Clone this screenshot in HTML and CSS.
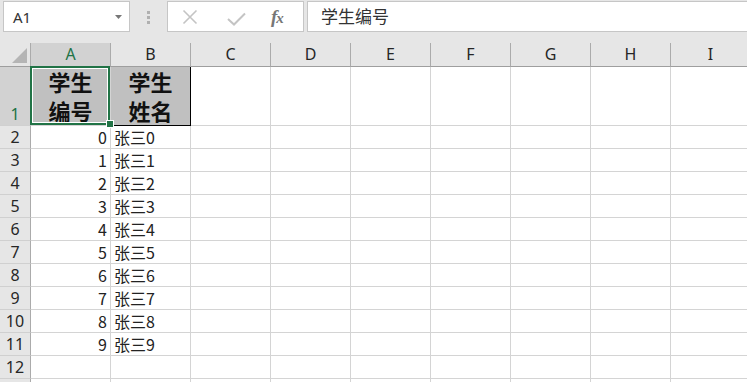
FILE: index.html
```html
<!DOCTYPE html>
<html lang="zh-CN">
<head>
    <meta charset="UTF-8">
    <meta name="viewport" content="width=device-width, initial-scale=1.0">
    <title>学生名单 - 工作表</title>
    <link rel="stylesheet" href="styles.css">
</head>
<body>
    <div class="formula-bar">
        <div class="name-box">
            <span>A1</span>
            <svg class="caret" width="7" height="4" viewBox="0 0 7 4"><polygon points="0,0 7,0 3.5,4" fill="#777"/></svg>
        </div>
        <div class="grip"><i></i><i></i><i></i></div>
        <div class="fx-box">
            <svg class="icon-cancel" width="16" height="16" viewBox="0 0 16 16"><path d="M1.5 1.5 L14.5 14.5 M14.5 1.5 L1.5 14.5" stroke="#c4c4c4" stroke-width="1.6" fill="none"/></svg>
            <svg class="icon-enter" width="19" height="14" viewBox="0 0 19 14"><path d="M1 7 L7 12.5 L18 1.5" stroke="#c4c4c4" stroke-width="2" fill="none"/></svg>
            <span class="fx"><i>f</i><i class="x">x</i></span>
        </div>
        <div class="formula-input">学生编号</div>
    </div>

    <div class="sheet">
        <!-- column headers -->
        <div class="corner">
            <svg width="15" height="15" viewBox="0 0 15 15"><polygon points="15,0 15,15 0,15" fill="#b5b5b5"/></svg>
        </div>
        <div class="col-head selected">A</div>
        <div class="col-head">B</div>
        <div class="col-head">C</div>
        <div class="col-head">D</div>
        <div class="col-head">E</div>
        <div class="col-head">F</div>
        <div class="col-head">G</div>
        <div class="col-head">H</div>
        <div class="col-head">I</div>

        <!-- row 1: titles -->
        <div class="row-head selected tall">1</div>
        <div class="cell title active">学生<br>编号<span class="fill-handle"></span></div>
        <div class="cell title boxed">学生<br>姓名</div>
        <div class="cell"></div><div class="cell"></div><div class="cell"></div><div class="cell"></div><div class="cell"></div><div class="cell"></div><div class="cell"></div>

        <div class="row-head">2</div>
        <div class="cell num">0</div><div class="cell">张三0</div>
        <div class="cell"></div><div class="cell"></div><div class="cell"></div><div class="cell"></div><div class="cell"></div><div class="cell"></div><div class="cell"></div>

        <div class="row-head">3</div>
        <div class="cell num">1</div><div class="cell">张三1</div>
        <div class="cell"></div><div class="cell"></div><div class="cell"></div><div class="cell"></div><div class="cell"></div><div class="cell"></div><div class="cell"></div>

        <div class="row-head">4</div>
        <div class="cell num">2</div><div class="cell">张三2</div>
        <div class="cell"></div><div class="cell"></div><div class="cell"></div><div class="cell"></div><div class="cell"></div><div class="cell"></div><div class="cell"></div>

        <div class="row-head">5</div>
        <div class="cell num">3</div><div class="cell">张三3</div>
        <div class="cell"></div><div class="cell"></div><div class="cell"></div><div class="cell"></div><div class="cell"></div><div class="cell"></div><div class="cell"></div>

        <div class="row-head">6</div>
        <div class="cell num">4</div><div class="cell">张三4</div>
        <div class="cell"></div><div class="cell"></div><div class="cell"></div><div class="cell"></div><div class="cell"></div><div class="cell"></div><div class="cell"></div>

        <div class="row-head">7</div>
        <div class="cell num">5</div><div class="cell">张三5</div>
        <div class="cell"></div><div class="cell"></div><div class="cell"></div><div class="cell"></div><div class="cell"></div><div class="cell"></div><div class="cell"></div>

        <div class="row-head">8</div>
        <div class="cell num">6</div><div class="cell">张三6</div>
        <div class="cell"></div><div class="cell"></div><div class="cell"></div><div class="cell"></div><div class="cell"></div><div class="cell"></div><div class="cell"></div>

        <div class="row-head">9</div>
        <div class="cell num">7</div><div class="cell">张三7</div>
        <div class="cell"></div><div class="cell"></div><div class="cell"></div><div class="cell"></div><div class="cell"></div><div class="cell"></div><div class="cell"></div>

        <div class="row-head">10</div>
        <div class="cell num">8</div><div class="cell">张三8</div>
        <div class="cell"></div><div class="cell"></div><div class="cell"></div><div class="cell"></div><div class="cell"></div><div class="cell"></div><div class="cell"></div>

        <div class="row-head">11</div>
        <div class="cell num">9</div><div class="cell">张三9</div>
        <div class="cell"></div><div class="cell"></div><div class="cell"></div><div class="cell"></div><div class="cell"></div><div class="cell"></div><div class="cell"></div>

        <div class="row-head">12</div>
        <div class="cell"></div><div class="cell"></div>
        <div class="cell"></div><div class="cell"></div><div class="cell"></div><div class="cell"></div><div class="cell"></div><div class="cell"></div><div class="cell"></div>

        <!-- next row, only its top edge is visible -->
        <div class="row-head"></div>
        <div class="cell"></div><div class="cell"></div>
        <div class="cell"></div><div class="cell"></div><div class="cell"></div><div class="cell"></div><div class="cell"></div><div class="cell"></div><div class="cell"></div>
    </div>
</body>
</html>
```

FILE: styles.css
```css
* {
    box-sizing: border-box;
}

html, body {
    margin: 0;
    padding: 0;
}

body {
    width: 747px;
    height: 382px;
    overflow: hidden;
    background-color: #fff;
    font-family: 'Noto Sans CJK SC', 'Noto Sans', sans-serif;
    color: #222;
}

/* formula bar */
.formula-bar {
    display: flex;
    align-items: flex-start;
    height: 43px;
    padding-top: 1px;
    background-color: #e6e6e6;
}

.name-box {
    display: flex;
    align-items: center;
    justify-content: space-between;
    width: 127px;
    height: 31px;
    margin-left: 3px;
    padding: 0 7px 0 9px;
    background-color: #fff;
    border: 1px solid #c6c6c6;
    font-family: 'Noto Sans', sans-serif;
    font-size: 15px;
    color: #333;
}

.name-box .caret {
    margin-top: 1px;
}

.grip {
    display: flex;
    flex-direction: column;
    gap: 2px;
    width: 3px;
    height: 31px;
    margin-left: 17px;
    padding-top: 10px;
}

.grip i {
    display: block;
    width: 3px;
    height: 3px;
    background-color: #b0b0b0;
}

.fx-box {
    display: flex;
    align-items: center;
    width: 137px;
    height: 31px;
    margin-left: 17px;
    background-color: #fff;
    border: 1px solid #c6c6c6;
}

.icon-cancel {
    margin-left: 14px;
}

.icon-enter {
    margin-left: 29px;
    margin-top: 4px;
}

.fx {
    margin-left: 25px;
    font-family: 'Liberation Serif', serif;
    font-size: 19px;
    font-weight: bold;
    color: #777;
    letter-spacing: -1px;
}

.fx .x {
    font-size: 15px;
}

.formula-input {
    flex: 1;
    height: 31px;
    margin-left: 3px;
    padding-left: 13px;
    background-color: #fff;
    border: 1px solid #c6c6c6;
    border-right: none;
    font-size: 17px;
    line-height: 28px;
    color: #333;
}

/* grid */
.sheet {
    display: grid;
    grid-template-columns: 31px repeat(9, 80px);
    grid-template-rows: 24px 59px repeat(12, 23px);
}

.corner,
.col-head,
.row-head {
    background-color: #e6e6e6;
    font-family: 'Noto Sans', sans-serif;
    font-size: 16px;
    color: #262626;
}

.corner {
    display: flex;
    align-items: flex-end;
    justify-content: flex-end;
    padding: 0 3px 3px 0;
    border-right: 1px solid #ababab;
    border-bottom: 1px solid #9e9e9e;
}

.col-head {
    text-align: center;
    line-height: 23px;
    border-right: 1px solid #ababab;
    border-bottom: 1px solid #9e9e9e;
}

.row-head {
    text-align: center;
    line-height: 22px;
    border-right: 1px solid #ababab;
    border-bottom: 1px solid #d0d0d0;
}

.row-head.tall {
    display: flex;
    align-items: flex-end;
    justify-content: center;
}

.col-head.selected,
.row-head.selected {
    background-color: #d2d2d2;
    color: #217346;
}

.cell {
    position: relative;
    padding: 0 3px;
    font-size: 16px;
    line-height: 22px;
    white-space: nowrap;
    border-right: 1px solid #d4d4d4;
    border-bottom: 1px solid #d4d4d4;
}

.cell.num {
    text-align: right;
}

.cell.title {
    display: flex;
    flex-direction: column;
    justify-content: flex-end;
    align-items: center;
    background-color: #c0c0c0;
    font-size: 22px;
    font-weight: bold;
    line-height: 29px;
    color: #111;
}

.cell.boxed {
    border-right-color: #000;
    border-bottom-color: #000;
}

/* active cell outline */
.cell.active::after {
    content: '';
    position: absolute;
    left: -1px;
    top: -1px;
    right: 0;
    bottom: 0;
    border: 2px solid #217346;
    box-shadow: inset 0 0 0 1px #fff;
}

.fill-handle {
    position: absolute;
    right: -3px;
    bottom: -2px;
    width: 6px;
    height: 6px;
    background-color: #217346;
    outline: 1px solid #fff;
    z-index: 2;
}
```
